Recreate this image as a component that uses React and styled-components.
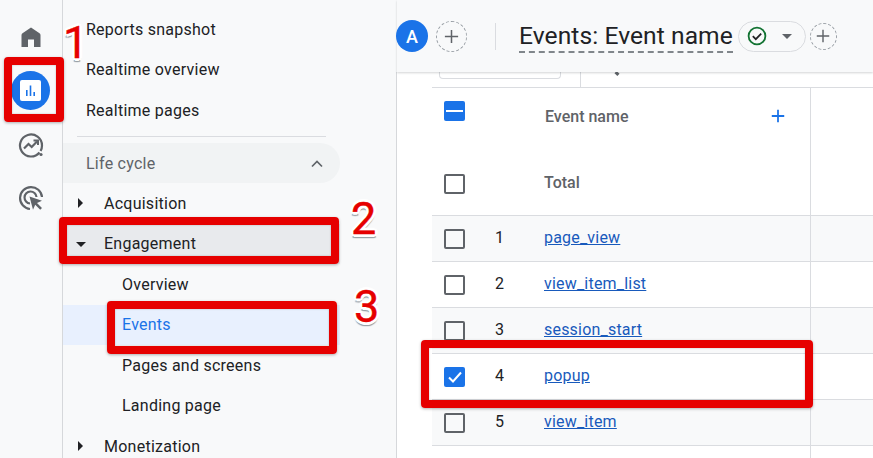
import React from "react";
import styled, { createGlobalStyle } from "styled-components";

const Global = createGlobalStyle`
  html, body { margin: 0; padding: 0; width: 873px; height: 458px; overflow: hidden; background: #fff; }
  body { font-family: Roboto, "Liberation Sans", sans-serif; color: #202124; }
  * { box-sizing: border-box; }
`;

const Page = styled.div`
  position: relative;
  width: 873px;
  height: 458px;
  display: flex;
  overflow: hidden;
  background: #f8f9fa;
`;

const Rail = styled.nav`
  width: 63px;
  flex: none;
  display: flex;
  flex-direction: column;
  align-items: center;
  padding-top: 17px;
  padding-right: 1px;
  border-right: 1px solid #d6d8db;
`;

const RailSlot = styled.div`
  width: 40px;
  height: ${(p) => p.$h}px;
  display: flex;
  align-items: center;
  justify-content: center;
  flex: none;
`;

const ActiveCircle = styled.div`
  width: 39px;
  height: 39px;
  border-radius: 50%;
  background: #1a73e8;
  display: flex;
  align-items: center;
  justify-content: center;
`;

const Sidebar = styled.aside`
  width: 334px;
  flex: none;
  display: flex;
  flex-direction: column;
  padding-top: 9px;
`;

const NavItem = styled.div`
  width: 277px;
  height: 40.5px;
  flex: none;
  display: flex;
  align-items: center;
  font-size: 16px;
  letter-spacing: 0.25px;
  padding-left: ${(p) => (p.$level === 2 ? 59 : p.$level === 1 ? 41 : 23)}px;
  color: ${(p) => (p.$active ? "#1a73e8" : "#202124")};
  background: ${(p) => (p.$active ? "#e8f0fe" : p.$grey ? "#e8eaed" : "transparent")};
  position: relative;
`;

const Caret = styled.span`
  position: absolute;
  left: 14px;
  top: 50%;
  width: 0;
  height: 0;
  ${(p) =>
    p.$open
      ? `margin-top:-2px; margin-left:-1px; border-left:5px solid transparent; border-right:5px solid transparent; border-top:5px solid #202124;`
      : `margin-top:-5px; margin-left:1px; border-top:5px solid transparent; border-bottom:5px solid transparent; border-left:5px solid #202124;`}
`;

const Rule = styled.div`
  height: 1px;
  margin: 5.5px 71px 6px 14px;
  background: #dadce0;
  flex: none;
`;

const Section = styled.div`
  width: 277px;
  height: 40px;
  flex: none;
  border-radius: 0 20px 20px 0;
  background: #f1f3f4;
  display: flex;
  align-items: center;
  justify-content: space-between;
  padding: 0 16px 0 23px;
  font-size: 16px;
  letter-spacing: 0.25px;
  color: #5f6368;
`;

const Main = styled.main`
  flex: 1;
  min-width: 0;
  display: flex;
  flex-direction: column;
`;

const TopBar = styled.header`
  height: 72px;
  flex: none;
  display: flex;
  align-items: center;
  background: #f8f9fa;
  box-shadow: 0 1px 2px rgba(60, 64, 67, 0.22);
  position: relative;
  z-index: 1;
`;

const Avatar = styled.div`
  width: 32px;
  height: 32px;
  margin-left: -1px;
  border-radius: 50%;
  background: #1a73e8;
  color: #fff;
  font-size: 18px;
  font-weight: 500;
  display: flex;
  align-items: center;
  justify-content: center;
`;

const AddCircle = styled.div`
  width: ${(p) => p.$size}px;
  height: ${(p) => p.$size}px;
  margin-left: ${(p) => p.$ml}px;
  border-radius: 50%;
  border: 1px dashed #9aa0a6;
  color: #5f6368;
  display: flex;
  align-items: center;
  justify-content: center;
  flex: none;
`;

const BarDivider = styled.div`
  width: 1px;
  height: 27px;
  background: #dadce0;
  margin: 0 23px 0 28px;
`;

const Title = styled.h1`
  margin: 2px 0 0;
  font-size: 24.6px;
  font-weight: 400;
  line-height: 30px;
  letter-spacing: 0.07px;
  white-space: nowrap;
  color: #202124;
  border-bottom: 2px dashed #80868b;
`;

const StatusPill = styled.div`
  width: 68px;
  height: 31px;
  margin-left: 5px;
  margin-right: 4px;
  border: 1px solid #dadce0;
  border-radius: 16px;
  display: flex;
  align-items: center;
  padding-left: 8px;
  gap: 15px;
`;

const PillCaret = styled.span`
  width: 0;
  height: 0;
  border-left: 5px solid transparent;
  border-right: 5px solid transparent;
  border-top: 5px solid #5f6368;
`;

const Content = styled.div`
  flex: 1;
  background: #fff;
  border-left: 1px solid #d6d8db;
  margin-left: -1px;
  padding-left: 35px;
  display: flex;
  flex-direction: column;
`;

const Toolbar = styled.div`
  height: 16px;
  flex: none;
  display: flex;
  border-bottom: 1px solid #dadce0;
  padding-left: 7px;
`;

const SearchStub = styled.div`
  width: 122px;
  height: 7px;
  border: 1px solid #dadce0;
  border-top: 0;
  border-radius: 0 0 4px 4px;
`;

const ToolbarLine = styled.div`
  width: 1px;
  height: 15px;
  margin-left: 19px;
  background: #dadce0;
`;

const GlassStub = styled.div`
  width: 4px;
  height: 3px;
  margin: 0 0 0 34px;
  background: #5f6368;
  transform: rotate(45deg);
`;

const Row = styled.div`
  height: ${(p) => p.$h}px;
  flex: none;
  display: flex;
  align-items: center;
  background: ${(p) => (p.$shade ? "#f8f9fa" : "#fff")};
  border-bottom: ${(p) => (p.$plain ? "0" : "1px solid #dadce0")};
`;

const NameCell = styled.div`
  width: 379px;
  flex: none;
  height: 100%;
  display: flex;
  align-items: center;
  padding-left: 12px;
  border-right: 1px solid #dadce0;
`;

const Box = styled.span`
  width: 21px;
  height: 20px;
  flex: none;
  border-radius: 2px;
  border: ${(p) => (p.$on ? "0" : "2px solid #5f6368")};
  background: ${(p) => (p.$on ? "#1a73e8" : "transparent")};
  display: flex;
  align-items: center;
  justify-content: center;
  margin-bottom: ${(p) => p.$lift || 0}px;
`;

const Index = styled.span`
  width: 79px;
  padding-left: 30px;
  flex: none;
  font-size: 16px;
  color: #202124;
  margin-bottom: 3px;
`;

const EventLink = styled.a`
  color: #185abc;
  text-decoration: underline;
  font-size: 16px;
  letter-spacing: 0.2px;
  margin-bottom: 3px;
`;

const HeadText = styled.span`
  margin-left: 80px;
  margin-bottom: 8px;
  font-size: 16px;
  font-weight: 500;
  color: #5f6368;
  flex: 1;
`;

const TotalText = styled.span`
  margin-left: 79px;
  margin-bottom: 3px;
  font-size: 16px;
  font-weight: 500;
  color: #5f6368;
`;

const HeadPlus = styled.span`
  margin-right: 24px;
  margin-bottom: 8px;
  display: flex;
`;

const Frame = styled.div`
  position: absolute;
  left: ${(p) => p.$x}px;
  top: ${(p) => p.$y}px;
  width: ${(p) => p.$w}px;
  height: ${(p) => p.$h}px;
  border: 8px solid #e60000;
  border-radius: 4px;
  box-shadow: 0 1px 3px rgba(0, 0, 0, 0.3), inset 0 0 2px rgba(0, 0, 0, 0.25);
  z-index: 3;
`;

const Step = styled.span`
  position: absolute;
  left: ${(p) => p.$x}px;
  top: ${(p) => p.$y}px;
  font-family: Roboto, "Liberation Sans", sans-serif;
  font-size: 45px;
  font-weight: 400;
  line-height: 45px;
  color: #e60000;
  -webkit-text-stroke: 0.4px #e60000;
  text-shadow: 3px 0 0 #fff, -3px 0 0 #fff, 0 3px 0 #fff, 0 -3px 0 #fff, 2px 2px 0 #fff,
    -2px 2px 0 #fff, 2px -2px 0 #fff, -2px -2px 0 #fff, -1px 4px 1px #9aa0a6, 1px 4px 1px #9aa0a6;
  z-index: 4;
`;

const Plus = ({ size = 18, color = "currentColor", w = 1.6 }) => (
  <svg width={size} height={size} viewBox="0 0 18 18" fill="none">
    <path d="M9 2v14M2 9h14" stroke={color} strokeWidth={w} />
  </svg>
);

const rows = [
  ["1", "page_view", true],
  ["2", "view_item_list", false],
  ["3", "session_start", true],
  ["4", "popup", false, true],
  ["5", "view_item", true],
];

export default function App() {
  return (
    <Page>
      <Global />
      <Rail>
        <RailSlot $h={40}>
          <svg width="24" height="24" viewBox="0 0 24 24" fill="#5f6368">
            <path d="M2.5 22V10.2Q2.5 9 3.5 8.3L12 2.5l8.5 5.8q1 .7 1 1.9V22H15v-7.5H9V22z" />
          </svg>
        </RailSlot>
        <RailSlot $h={66}>
          <ActiveCircle>
            <svg width="21" height="21" viewBox="0 0 21 21">
              <rect width="21" height="21" rx="2" fill="#fff" />
              <path d="M6 10h1.6v6H6zM9.7 5.5h1.6V16H9.7zM13.4 12H15v4h-1.6z" fill="#1a73e8" />
            </svg>
          </ActiveCircle>
        </RailSlot>
        <RailSlot $h={44}>
          <svg width="26" height="26" viewBox="0 0 26 26" fill="none">
            <path d="M21.5 20.5A11 11 0 1 1 24 13.5c0 2.2-.5 4-1.4 5.5" stroke="#5f6368" strokeWidth="2.2" />
            <path d="M6 16.5l4.5-4.5 3.2 3L19 9.5" stroke="#5f6368" strokeWidth="2.2" />
            <path d="M15.5 8.5H20V13" stroke="#5f6368" strokeWidth="2" />
            <circle cx="23" cy="22.5" r="1.6" fill="#5f6368" />
          </svg>
        </RailSlot>
        <RailSlot $h={62}>
          <svg width="26" height="26" viewBox="0 0 26 26" fill="none">
            <path d="M12 24A11 11 0 1 1 24 12" stroke="#5f6368" strokeWidth="2.2" />
            <path d="M12 18.5a6 6 0 1 1 6.5-6.5" stroke="#5f6368" strokeWidth="2.2" />
            <path d="M11.5 11.5L24 15.8l-5 2.2 5 5-1.8 1.8-5-5-2.2 5z" fill="#5f6368" />
          </svg>
        </RailSlot>
      </Rail>

      <Sidebar>
        <NavItem>Reports snapshot</NavItem>
        <NavItem>Realtime overview</NavItem>
        <NavItem>Realtime pages</NavItem>
        <Rule />
        <Section>
          Life cycle
          <svg width="14" height="9" viewBox="0 0 14 9" fill="none">
            <path d="M2 7.5l5-5 5 5" stroke="#5f6368" strokeWidth="1.7" />
          </svg>
        </Section>
        <NavItem $level={1}>
          <Caret />
          Acquisition
        </NavItem>
        <NavItem $level={1} $grey>
          <Caret $open />
          Engagement
        </NavItem>
        <NavItem $level={2}>Overview</NavItem>
        <NavItem $level={2} $active>
          Events
        </NavItem>
        <NavItem $level={2}>Pages and screens</NavItem>
        <NavItem $level={2}>Landing page</NavItem>
        <NavItem $level={1}>
          <Caret />
          Monetization
        </NavItem>
      </Sidebar>

      <Main>
        <TopBar>
          <Avatar>A</Avatar>
          <AddCircle $size={31} $ml={8}>
            <Plus size={17} />
          </AddCircle>
          <BarDivider />
          <Title>Events: Event name</Title>
          <StatusPill>
            <svg width="20" height="20" viewBox="0 0 20 20" fill="none">
              <circle cx="10" cy="10" r="8.4" stroke="#137333" strokeWidth="1.8" />
              <path d="M5.8 10.2l3 3 5.4-5.6" stroke="#202124" strokeWidth="1.7" />
            </svg>
            <PillCaret />
          </StatusPill>
          <AddCircle $size={27} $ml={0}>
            <Plus size={16} />
          </AddCircle>
        </TopBar>
        <Content>
          <Toolbar>
            <SearchStub />
            <ToolbarLine />
            <GlassStub />
          </Toolbar>
          <Row $h={64} $plain>
            <NameCell>
              <Box $on $lift={18}>
                <svg width="17" height="2" viewBox="0 0 17 2">
                  <rect width="17" height="2" fill="#fff" />
                </svg>
              </Box>
              <HeadText>Event name</HeadText>
              <HeadPlus>
                <Plus size={16} color="#1a73e8" w={2} />
              </HeadPlus>
            </NameCell>
          </Row>
          <Row $h={64}>
            <NameCell>
              <Box />
              <TotalText>Total</TotalText>
            </NameCell>
          </Row>
          {rows.map(([n, name, shade, on]) => (
            <Row key={n} $h={46} $shade={shade}>
              <NameCell>
                <Box $on={on}>
                  {on && (
                    <svg width="16" height="14" viewBox="0 0 16 14" fill="none">
                      <path d="M2 7.5l4 4 8-9" stroke="#fff" strokeWidth="2" />
                    </svg>
                  )}
                </Box>
                <Index>{n}</Index>
                <EventLink href="#">{name}</EventLink>
              </NameCell>
            </Row>
          ))}
          <Row $h={20} $plain>
            <NameCell />
          </Row>
        </Content>
      </Main>

      <Frame $x={4} $y={57} $w={60} $h={65} />
      <Frame $x={59} $y={217} $w={280} $h={47} />
      <Frame $x={107} $y={301} $w={230} $h={53} />
      <Frame $x={421} $y={340} $w={392} $h={68} />
      <Step $x={63} $y={20}>1</Step>
      <Step $x={351} $y={196}>2</Step>
      <Step $x={354} $y={284}>3</Step>
    </Page>
  );
}
